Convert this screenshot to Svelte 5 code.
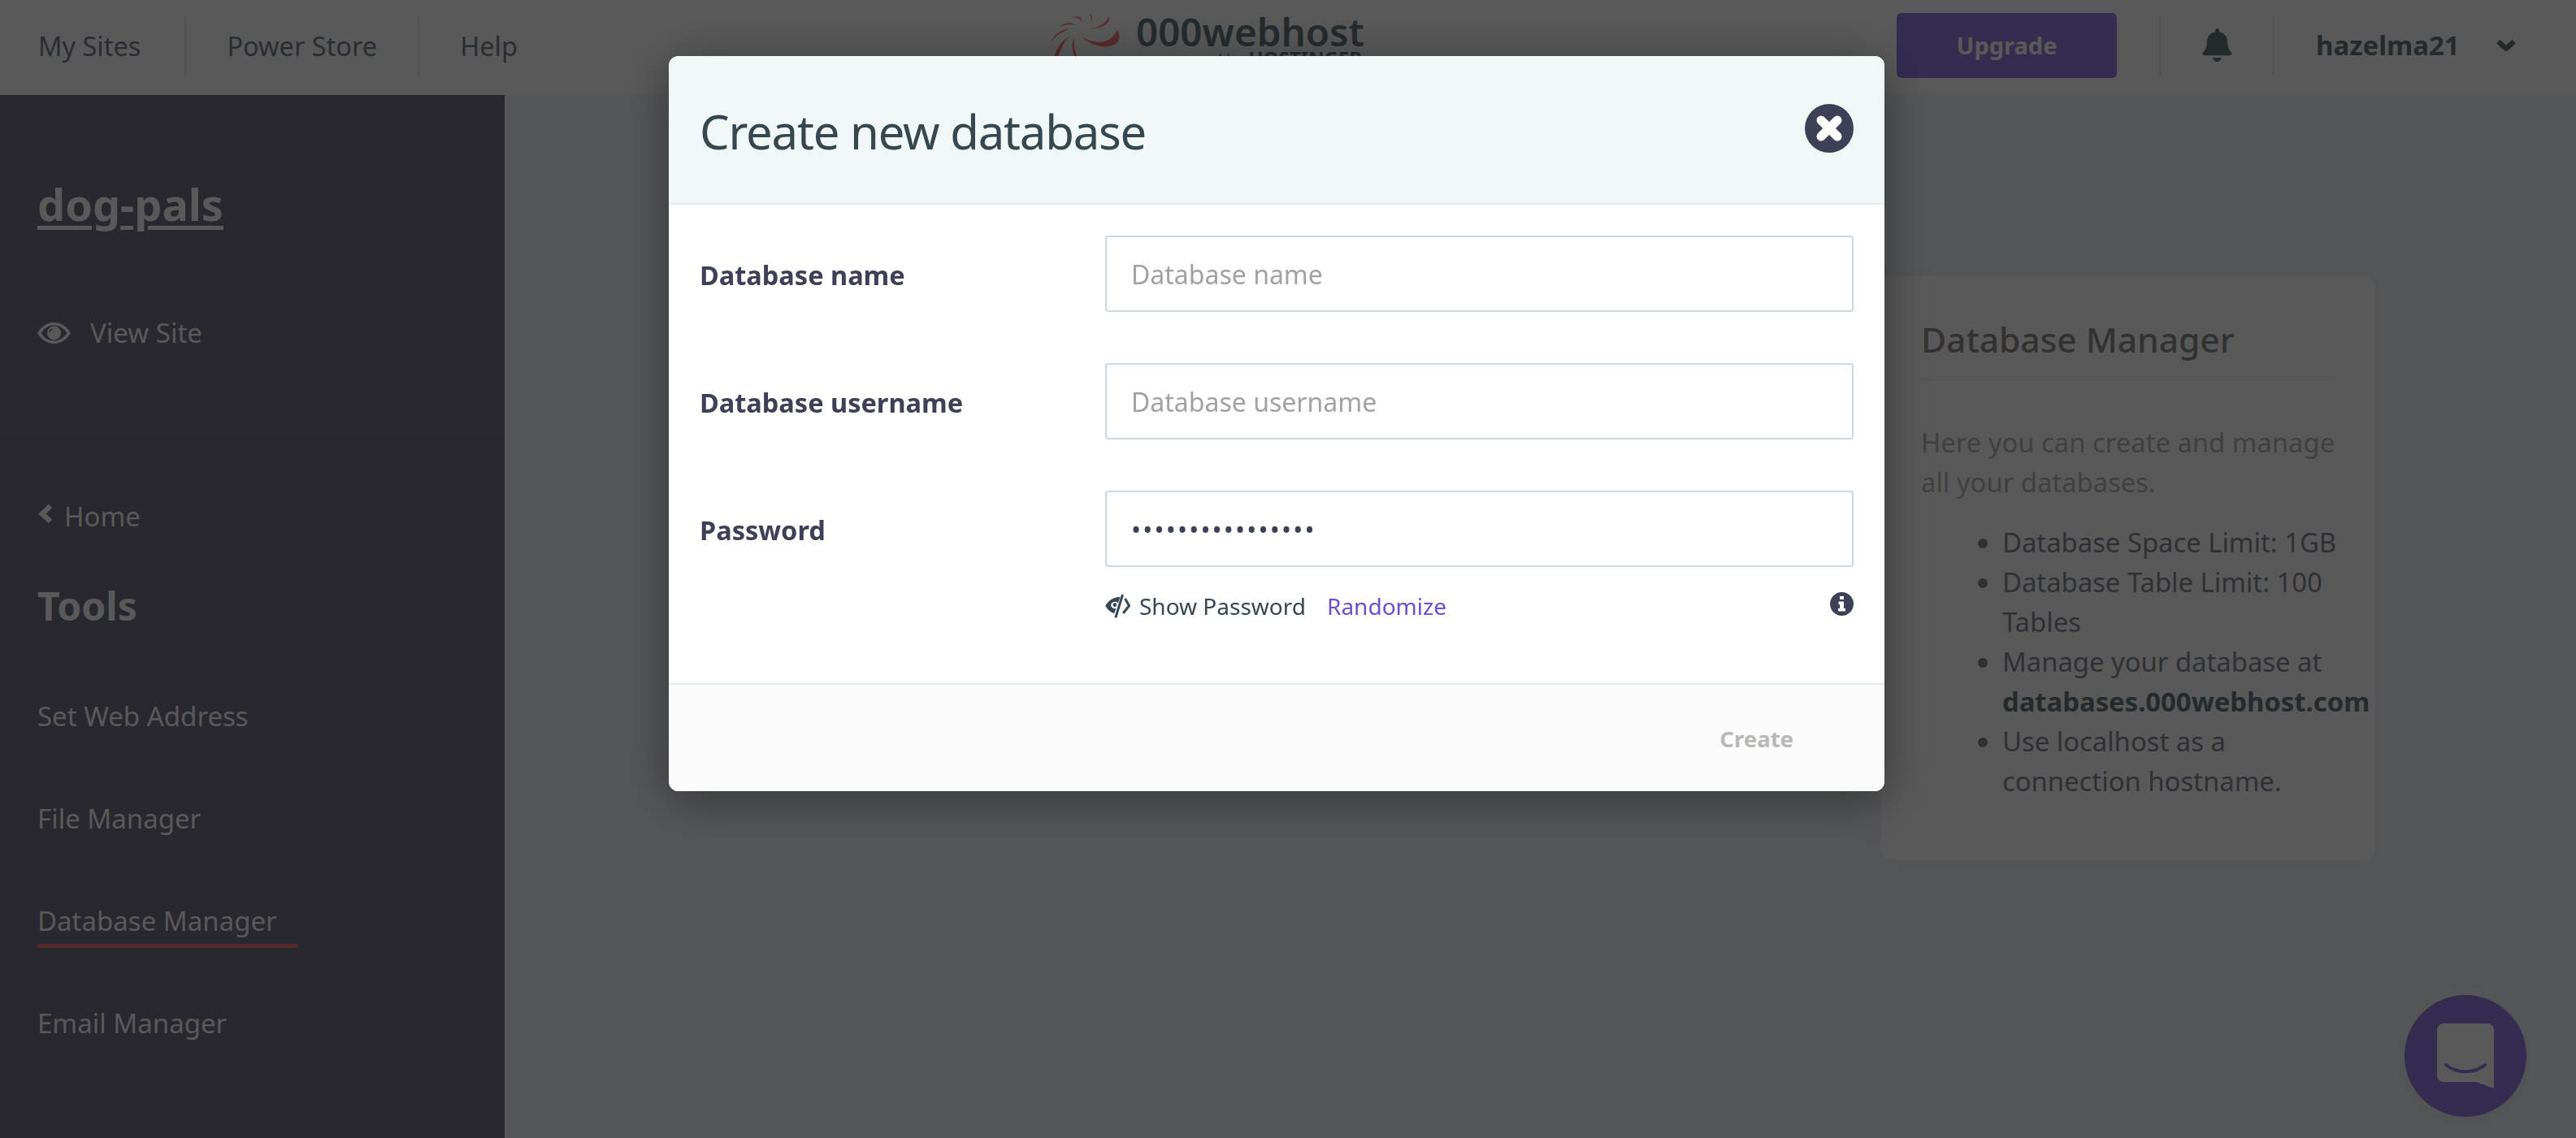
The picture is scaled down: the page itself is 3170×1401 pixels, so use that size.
<script>
  const tools = ['Set Web Address', 'File Manager', 'Database Manager', 'Email Manager'];
</script>

<div class="page">
  <header class="topbar">
    <nav class="topnav">
      <a href="#sites">My Sites</a>
      <a href="#store">Power Store</a>
      <a href="#help">Help</a>
    </nav>
    <div class="logo">
      <svg class="swirl" viewBox="270 40 290 200" aria-hidden="true">
        <path d="M397 138C440 165 500 165 522 112C552 150 510 175 470 172C440 170 410 155 397 138Z"/>
        <path d="M420 108C450 105 480 90 494 62C500 85 470 105 420 108Z"/>
        <path d="M418 52C432 55 438 68 424 88C432 68 428 60 418 52Z"/>
        <path d="M362 64C378 58 392 62 396 84C388 70 378 66 362 64Z"/>
        <path d="M312 98C326 86 350 82 368 90C350 90 332 92 312 98Z"/>
        <path d="M280 156C290 130 316 108 350 106C320 116 298 132 280 156Z"/>
        <path d="M292 208C300 180 320 150 345 138C325 160 310 190 300 240Z"/>
        <path d="M366 138C350 170 360 210 385 235C370 200 362 170 366 138Z"/>
      </svg>
      <div class="wordmark">
        <div class="brand">000webhost</div>
        <div class="sub"><span>powered by</span> <b>HOSTINGER</b></div>
      </div>
    </div>
    <div class="account">
      <button class="upgrade">Upgrade</button>
      <div class="bell">
        <svg viewBox="0 0 448 512" aria-hidden="true"><path d="M224 512c35.32 0 63.97-28.65 63.97-64H160.03c0 35.35 28.65 64 63.97 64zm215.39-149.71c-19.32-20.76-55.47-51.99-55.47-154.29 0-77.7-54.48-139.9-127.94-155.16V32c0-17.67-14.32-32-31.98-32s-31.98 14.33-31.98 32v20.84C118.56 68.1 64.08 130.3 64.08 208c0 102.3-36.15 133.53-55.47 154.29-6 6.45-8.66 14.16-8.61 21.71.11 16.4 12.98 32 32.1 32h383.8c19.12 0 32-15.6 32.1-32 .05-7.55-2.61-15.27-8.61-21.71z"/></svg>
      </div>
      <span class="user">hazelma21</span>
      <svg class="chev" viewBox="0 0 24 14" aria-hidden="true"><path d="M3 3l9 8 9-8"/></svg>
    </div>
  </header>

  <div class="content">
    <aside class="sidebar">
      <a class="site" href="#site">dog-pals</a>
      <a class="view" href="#view">
        <svg viewBox="0 0 41 26" aria-hidden="true"><path fill-rule="evenodd" d="M20.500 0C30 0 37 6 41 13C37 20 30 26 20.500 26C11 26 4 20 0 13C4 6 11 0 20.500 0ZM20.500 3.500C13 3.500 8 8 4.500 13C8 18 13 22.500 20.500 22.500C28 22.500 33 18 36.500 13C33 8 28 3.500 20.500 3.500ZM20.500 4.500A8.500 8.500 0 1 1 20.500 21.500A8.500 8.500 0 1 1 20.500 4.500ZM17 7.500C15 9 14.500 11 15 13.500C16 11 17 9.500 19 8.500C18.500 7.500 18 7.200 17 7.500Z"/></svg>
        View Site
      </a>
      <hr />
      <a class="home" href="#home">
        <svg viewBox="0 0 18 27" aria-hidden="true"><path d="M15 4L5 13.500l10 9.500"/></svg>
        Home
      </a>
      <h2>Tools</h2>
      <ul class="toolnav">
        {#each tools as tool}
          <li class:active={tool === 'Database Manager'}><a href="#tool">{tool}</a></li>
        {/each}
      </ul>
    </aside>

    <main class="main">
      <section class="card">
        <h3>Database Manager</h3>
        <p>Here you can create and manage all your databases.</p>
        <ul>
          <li>Database Space Limit: 1GB</li>
          <li>Database Table Limit: 100 Tables</li>
          <li>Manage your database at <strong>databases.000webhost.com</strong></li>
          <li>Use localhost as a connection hostname.</li>
        </ul>
      </section>
    </main>
  </div>

  <button class="chat" aria-label="Chat">
    <svg viewBox="0 0 70 80" aria-hidden="true">
      <path class="bubble" d="M8 0H62a8 8 0 0 1 8 8V80L48 72H8a8 8 0 0 1-8-8V8a8 8 0 0 1 8-8Z"/>
      <path class="smile" d="M11 51C24 62 46 62 59 51"/>
    </svg>
  </button>
</div>

<div class="overlay">
  <div class="modal" role="dialog" aria-label="Create new database">
    <div class="m-head">
      <h1>Create new database</h1>
      <button class="close" aria-label="Close">
        <svg viewBox="0 0 60 60" aria-hidden="true">
          <circle cx="30" cy="30" r="30"/>
          <path d="M20 20L40 40M40 20L20 40"/>
        </svg>
      </button>
    </div>
    <form class="m-body">
      <div class="row">
        <label for="dbn">Database name</label>
        <input id="dbn" type="text" placeholder="Database name" />
      </div>
      <div class="row">
        <label for="dbu">Database username</label>
        <input id="dbu" type="text" placeholder="Database username" />
      </div>
      <div class="row">
        <label for="dbp">Password</label>
        <input id="dbp" type="password" value="aaaaaaaaaaaaaaaa" />
      </div>
      <div class="pw-tools">
        <svg class="slash" viewBox="0 0 92 90" aria-hidden="true">
          <path d="M52 12C28 12 10 28 0 44C8 58 19 68 33 73L55 12Z"/>
          <ellipse class="almond" cx="36" cy="42" rx="15" ry="13"/>
          <circle cx="35" cy="41" r="7"/>
          <path class="line" d="M64 3L38 88M73 18L88 44L66 72"/>
        </svg>
        <span>Show Password</span>
        <a href="#rand">Randomize</a>
        <svg class="info" viewBox="0 0 29 29" aria-hidden="true">
          <circle cx="14.500" cy="14.500" r="14.500"/>
          <path d="M12 5h5v4h-5zM10.500 11.500H17V20h2v3.500H10V20h2v-5h-1.500z"/>
        </svg>
      </div>
    </form>
    <div class="m-foot">
      <button class="create" disabled>Create</button>
    </div>
  </div>
</div>

<style>
  :global(html), :global(body) {
    margin: 0;
    height: 1401px;
    overflow: hidden;
  }
  :global(body) {
    font-family: "Noto Sans", "Open Sans", sans-serif;
    font-size: 32px;
    line-height: 48px;
    background: #f3f6fb;
  }
  a { color: inherit; text-decoration: none; }
  button { font: inherit; border: 0; background: none; padding: 0; }

  .page { position: relative; height: 1401px; overflow: hidden; }

  .topbar {
    display: flex;
    align-items: center;
    height: 117px;
    padding: 0 73px 0 47px;
    background: #fff;
    color: #5f6b7c;
  }
  .topnav { display: flex; flex: 0 0 1243px; align-items: center; margin-bottom: 4px; }
  .topnav a {
    display: flex;
    align-items: center;
    height: 73px;
    padding: 0 50px;
    border-right: 2px solid #e9e9e9;
    color: #78808f;
    font-size: 32.500px;
  }
  .topnav a:first-child { padding: 0 54px 0 0; }
  .topnav a:last-child { border: 0; }

  .logo { display: flex; align-self: flex-start; height: 117px; overflow: hidden; width: 400px; }
  .swirl { flex: none; width: 97px; height: 67px; margin: 13px 11px 0 0; fill: #ff7a80; }
  .wordmark { width: 278px; padding-top: 17px; }
  .brand { font-size: 47.500px; line-height: 44px; font-weight: 600; color: #6c7a80; white-space: nowrap; }
  .sub { font-size: 24px; line-height: 22px; color: #6c7a80; text-align: right; white-space: nowrap; }
  .sub span { font-size: 19px; }

  .account { display: flex; align-items: center; margin-left: auto; margin-bottom: 6px; }
  .upgrade {
    width: 271px;
    height: 80px;
    border-radius: 6px;
    background: #977ee4;
    color: #fff;
    font-size: 29px;
    font-weight: 700;
    margin-right: 52px;
  }
  .bell {
    display: flex;
    align-items: center;
    justify-content: center;
    width: 142px;
    height: 73px;
    border-left: 2px solid #e9e9e9;
    border-right: 2px solid #e9e9e9;
    box-sizing: border-box;
  }
  .bell svg { width: 37px; height: 41px; fill: #6c7a80; }
  .user { margin-left: 51px; font-size: 33px; font-weight: 700; color: #6c7a80; width: 173px; white-space: nowrap; }
  .chev { width: 26px; height: 15px; margin-left: 48px; fill: none; stroke: #6c7a80; stroke-width: 6; }

  .content { display: flex; height: 1284px; }

  .sidebar {
    flex: 0 0 621px;
    box-sizing: border-box;
    padding: 96px 0 0 46px;
    background: #727283;
    color: #fff;
    font-size: 33px;
  }
  .site { display: block; font-size: 54px; line-height: 76px; font-weight: 700; text-decoration: underline; text-decoration-thickness: 5px; text-underline-offset: 6px; }
  .view { display: flex; align-items: center; margin-top: 97px; gap: 24px; }
  .view svg { width: 41px; height: 26px; fill: #fff; }
  hr { height: 2px; margin: 97px 0 0 -46px; border: 0; background: #7a7a8b; }
  .home { display: flex; align-items: center; margin-top: 79px; gap: 13px; }
  .home svg { width: 20px; height: 27px; margin-top: -8px; fill: none; stroke: #fff; stroke-width: 6.500; }
  .sidebar h2 { margin: 56px 0 0; font-size: 48px; line-height: 60px; font-weight: 700; }
  .toolnav { list-style: none; margin: 82px 0 0; padding: 0; display: flex; flex-direction: column; align-items: flex-start; gap: 78px; }
  .toolnav li { position: relative; }
  .toolnav .active { width: 320px; }
  .toolnav .active::after {
    content: "";
    position: absolute;
    left: 0; right: 0; bottom: -9px;
    height: 5px;
    background: #ff7a80;
  }

  .main { flex: 1; padding: 223px 0 0 1693px; min-width: 0; }
  .card {
    box-sizing: border-box;
    width: 609px;
    height: 719px;
    padding: 50px 44px 0 50px;
    border-radius: 14px;
    background: #fff;
    font-size: 32.800px;
    box-shadow: 0 8px 40px rgba(60, 80, 60, .06);
  }
  .card h3 {
    margin: 0 6px 0 0;
    padding-bottom: 20px;
    border-bottom: 2px solid #f0f0f0;
    font-size: 42.500px;
    line-height: 56px;
    font-weight: 500;
    color: #909090;
    white-space: nowrap;
  }
  .card p { margin: 52px 0 0; line-height: 49px; color: #b8b8b8; }
  .card ul { margin: 25px 0 0; padding-left: 100px; line-height: 49px; color: #8b8b96; }
  .card strong { color: #6c7a80; white-space: nowrap; }

  .chat {
    position: absolute;
    right: 61px;
    bottom: 26px;
    display: flex;
    align-items: center;
    justify-content: center;
    width: 150px;
    height: 150px;
    border-radius: 50%;
    background: #977ee4;
    box-shadow: 0 4px 40px rgba(0, 0, 0, .05);
  }
  .chat svg { width: 70px; height: 80px; }
  .bubble { fill: #fff; }
  .smile { fill: none; stroke: #977ee4; stroke-width: 4; stroke-linecap: round; }

  .overlay {
    position: fixed;
    inset: 0;
    background: rgba(0, 0, 0, .65);
  }
  .modal {
    position: absolute;
    left: 823px;
    top: 69px;
    width: 1496px;
    height: 905px;
    display: flex;
    flex-direction: column;
    border-radius: 12px;
    background: #fff;
    box-shadow: 0 10px 60px rgba(0, 0, 0, .4);
    overflow: hidden;
  }
  .m-head {
    flex: 0 0 181px;
    display: flex;
    align-items: center;
    justify-content: space-between;
    padding: 0 38px;
    background: #f1f7f6;
    border-bottom: 2px solid #e3eeec;
  }
  h1 { margin: 4px 0 0; font-size: 58px; letter-spacing: -1.200px; line-height: 80px; font-weight: 400; color: #36474f; }
  .close { width: 60px; height: 60px; margin-top: -3px; }
  .close svg { display: block; }
  .close circle { fill: #3d4056; }
  .close path { stroke: #fff; stroke-width: 11; stroke-linecap: round; }

  .m-body { flex: 1; padding: 38px 38px 0; }
  .row { display: flex; align-items: center; height: 94px; margin-bottom: 63px; }
  .row label { flex: 0 0 499px; margin-top: 4px; font-size: 32.500px; font-weight: 700; color: #3d4056; }
  .row input {
    flex: 1;
    min-width: 0;
    box-sizing: border-box;
    height: 94px;
    padding: 0 30px;
    border: 2px solid #ccd8e2;
    border-radius: 4px;
    background: #fff;
    font: inherit;
    color: #3d4056;
    outline: none;
  }
  .row input::placeholder { color: #a2a2a2; opacity: 1; }
  #dbp { letter-spacing: 2.200px; }

  .pw-tools {
    display: flex;
    align-items: center;
    margin: -63px 0 0 499px;
    padding-top: 26px;
    font-size: 28px;
    line-height: 44px;
    color: #36474f;
  }
  .slash { width: 31px; height: 30px; margin-right: 11px; fill: #36474f; }
  .slash .line { fill: none; stroke: #36474f; stroke-width: 9; }
  .slash .almond { fill: #fff; }
  .pw-tools a { margin-left: 26px; color: #6d4dcb; }
  .info { width: 29px; height: 29px; margin: -6px 0 0 auto; }
  .info circle { fill: #3d4056; }
  .info path { fill: #fff; }

  .m-foot {
    flex: 0 0 131px;
    display: flex;
    align-items: center;
    justify-content: flex-end;
    padding-right: 112px;
    background: #fafafa;
    border-top: 2px solid #e0ecea;
  }
  .create { margin-top: 3px; font-size: 27.500px; font-weight: 700; color: #b8b8b8; }
</style>
